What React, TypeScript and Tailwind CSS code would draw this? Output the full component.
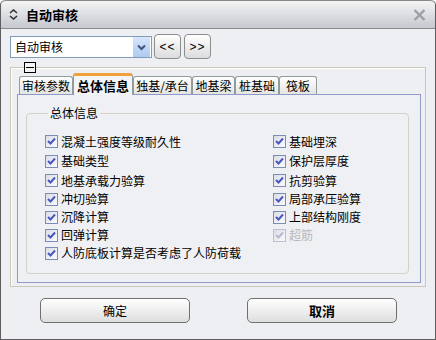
import React from 'react';

const font = { fontFamily: '"Noto Sans CJK SC", "Noto Sans", sans-serif' };

type Item = { label: string; h: string; disabled?: boolean };

const leftItems: Item[] = [
  { label: '混凝土强度等级耐久性', h: 'h-[19px]' },
  { label: '基础类型', h: 'h-[20px]' },
  { label: '地基承载力验算', h: 'h-[19px]' },
  { label: '冲切验算', h: 'h-[18px]' },
  { label: '沉降计算', h: 'h-[18px]' },
  { label: '回弹计算', h: 'h-[18px]' },
  { label: '人防底板计算是否考虑了人防荷载', h: 'h-[18px]' },
];

const rightItems: Item[] = [
  { label: '基础埋深', h: 'h-[19px]' },
  { label: '保护层厚度', h: 'h-[20px]' },
  { label: '抗剪验算', h: 'h-[19px]' },
  { label: '局部承压验算', h: 'h-[18px]' },
  { label: '上部结构刚度', h: 'h-[18px]' },
  { label: '超筋', h: 'h-[18px]', disabled: true },
];

const tabs = [
  { label: '审核参数', w: 'w-[54px]' },
  { label: '总体信息', w: 'w-[60px]', active: true },
  { label: '独基/承台', w: 'w-[59px]' },
  { label: '地基梁', w: 'w-[43px]' },
  { label: '桩基础', w: 'w-[44px]' },
  { label: '筏板', w: 'w-[38px]' },
];

function Check({ item }: { item: Item }) {
  return (
    <div className={`flex items-center gap-[3px] ${item.h}`}>
      <span
        className={`w-[13px] h-[13px] border flex items-center justify-center bg-gradient-to-br from-[#dcdce6] to-[#fbfbfd] ${
          item.disabled ? 'border-[#b9c1d6]' : 'border-[#7b8cb8]'
        }`}
      >
        <svg width="9" height="9" viewBox="0 0 9 9">
          <polyline
            points="1,4 3.5,6.5 8,1.5"
            fill="none"
            stroke={item.disabled ? '#b4bad0' : '#4858c0'}
            strokeWidth="2"
          />
        </svg>
      </span>
      <span className={`text-[12px] leading-[14px] ${item.disabled ? 'text-[#b8b8b8]' : 'text-black'}`}>
        {item.label}
      </span>
    </div>
  );
}

export default function App() {
  return (
    <div
      style={font}
      className="w-[436px] h-[340px] flex flex-col bg-[#eeeff2] border border-t-0 border-[#5e5e5e] rounded-t-[5px] overflow-hidden text-black"
    >
      {/* title bar */}
      <div className="h-[29px] shrink-0 flex items-center border-b border-t border-[#8a8a8a] rounded-t-[5px] bg-gradient-to-b from-[#f5f5f6] via-[#dcdee2] to-[#c5c8ce] pl-[8px] pr-[8px]">
        <svg width="9" height="11" viewBox="0 0 9 11">
          <polyline points="1,4 4.5,1 8,4" fill="none" stroke="#333" strokeWidth="1.6" />
          <polyline points="1,7 4.5,10 8,7" fill="none" stroke="#333" strokeWidth="1.6" />
        </svg>
        <span className="ml-[8px] text-[13px] font-bold leading-none">自动审核</span>
        <svg className="ml-auto mr-[1px]" width="13" height="12" viewBox="0 0 13 12">
          <path d="M1.5 1 L11.5 11 M11.5 1 L1.5 11" stroke="#9d9fa3" strokeWidth="2.4" />
        </svg>
      </div>

      {/* selector row */}
      <div className="flex items-start mt-[5px] pl-[9px] gap-[2px]">
        <div className="mt-[2px] w-[142px] h-[22px] border border-[#7f9db9] bg-white flex items-center">
          <span className="pl-[4px] text-[12px] leading-none flex-1">自动审核</span>
          <span className="w-[17px] h-[20px] mr-[1px] flex items-center justify-center bg-gradient-to-b from-[#d6e6fb] to-[#aecbf0]">
            <svg width="9" height="7" viewBox="0 0 9 7">
              <polyline points="1,1.5 4.5,5 8,1.5" fill="none" stroke="#3f5479" strokeWidth="2" />
            </svg>
          </span>
        </div>
        <button className="w-[27px] h-[25px] rounded-[4px] border border-[#8d8d8d] bg-gradient-to-b from-[#ffffff] to-[#dcdcde] text-[12px] tracking-[1px] leading-none" style={{ fontFamily: '"Liberation Sans", sans-serif' }}>
          &lt;&lt;
        </button>
        <button className="ml-[1px] w-[27px] h-[25px] rounded-[4px] border border-[#8d8d8d] bg-gradient-to-b from-[#ffffff] to-[#dcdcde] text-[12px] tracking-[1px] leading-none" style={{ fontFamily: '"Liberation Sans", sans-serif' }}>
          &gt;&gt;
        </button>
      </div>

      {/* outer group */}
      <fieldset className="mt-[3px] ml-[9px] mr-[9px] border border-[#c9c7b8] shadow-[inset_1px_1px_0_#ffffff] pl-[6px] pr-[4px] pb-[3px] min-w-0">
        <legend className="ml-[7px] p-0">
          <span className="block w-[12px] h-[11px] border border-black bg-[#f4f4f4] relative">
            <span className="absolute left-[1px] right-[1px] top-[4px] h-px bg-black" />
          </span>
        </legend>

        <div className="flex items-end h-[21px] pl-[2px]">
          {tabs.map((t) =>
            t.active ? (
              <div
                key={t.label}
                className={`${t.w} h-[22px] -mb-px z-10 relative flex items-center justify-center bg-[#f3f4f8] border-x border-[#919b9c] border-t-[3px] border-t-[#f0a23a] rounded-t-[3px] text-[13px] font-bold leading-none`}
              >
                {t.label}
              </div>
            ) : (
              <div
                key={t.label}
                className={`${t.w} h-[18px] flex items-center justify-center border border-b-0 border-[#919b9c] rounded-t-[3px] bg-gradient-to-b from-[#ffffff] to-[#e4e4e0] text-[12px] leading-none`}
              >
                {t.label}
              </div>
            ),
          )}
        </div>

        <div className="border border-[#8f99cc] bg-[#eff0f4] pl-[8px] pr-[11px] pt-[11px] pb-[8px]">
          <fieldset className="border border-[#d2d1c4] rounded-[4px] pl-[18px] pb-[11px] min-w-0">
            <legend className="ml-[3px] px-[2px] text-[12px] leading-[14px]">总体信息</legend>
            <div className="flex mt-[12px]">
              <div className="w-[228px] flex flex-col">
                {leftItems.map((i) => (
                  <Check key={i.label} item={i} />
                ))}
              </div>
              <div className="flex flex-col">
                {rightItems.map((i) => (
                  <Check key={i.label} item={i} />
                ))}
              </div>
            </div>
          </fieldset>
        </div>
      </fieldset>

      {/* buttons */}
      <div className="flex mt-[11px] pl-[39px] gap-[57px]">
        <button className="w-[150px] h-[25px] rounded-[5px] border border-[#707070] bg-gradient-to-b from-[#ffffff] to-[#dedede] text-[12px] leading-none">
          确定
        </button>
        <button className="w-[150px] h-[25px] rounded-[5px] border border-[#707070] bg-gradient-to-b from-[#ffffff] to-[#dedede] text-[13px] font-bold leading-none">
          取消
        </button>
      </div>
    </div>
  );
}
